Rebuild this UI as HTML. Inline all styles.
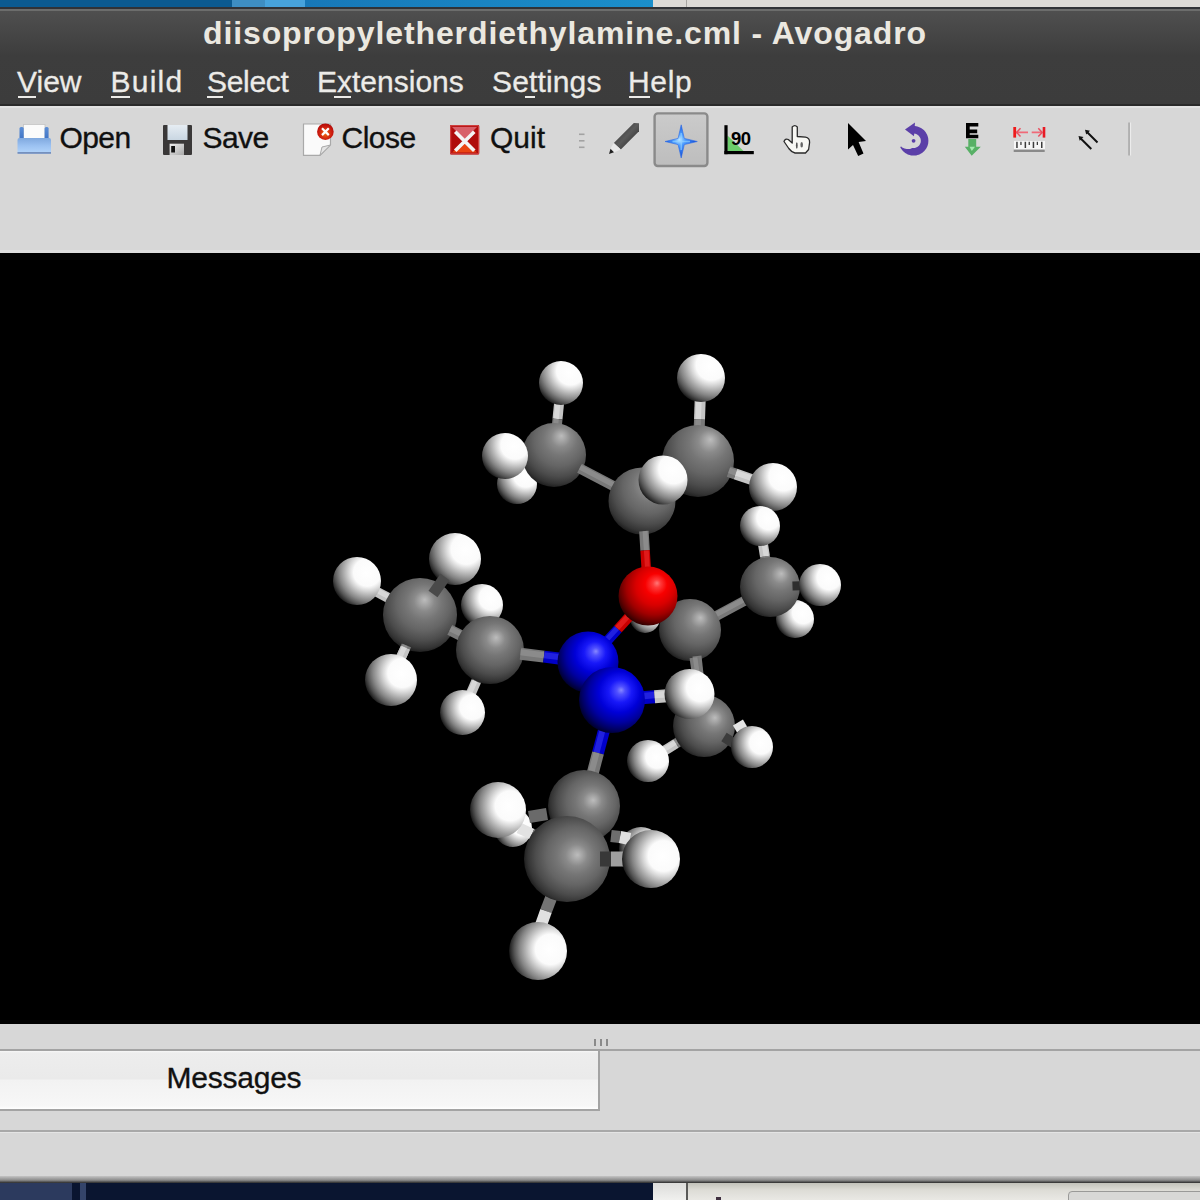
<!DOCTYPE html>
<html><head><meta charset="utf-8">
<style>
html,body{margin:0;padding:0;width:1200px;height:1200px;overflow:hidden;background:#000;font-family:"Liberation Sans",sans-serif;}
.a{position:absolute;}
.t{position:absolute;white-space:nowrap;line-height:1;}
.menu{color:#ecebe8;font-size:30px;top:67px;-webkit-text-stroke:0.3px #ecebe8;}
.menu u{text-decoration:none;position:relative;}
.menu u:after{content:"";position:absolute;left:0;right:0;bottom:-6px;height:2px;background:#ecebe8;}
.tb{color:#101010;font-size:30px;top:123px;-webkit-text-stroke:0.35px #101010;}
</style></head>
<body>
<!-- desktop top strip -->
<div class="a" style="left:0;top:0;width:1200px;height:8px;background:#dcdad6"></div>
<div class="a" style="left:0;top:0;width:653px;height:8px;background:linear-gradient(90deg,#0b5a90 0,#0b5a90 232px,#3e8ec2 232px,#3e8ec2 265px,#47a3dc 265px,#47a3dc 305px,#1778b8 305px,#1b8fcb 653px)"></div>
<div class="a" style="left:686px;top:0;width:1px;height:8px;background:#a8a6a2"></div>
<!-- window frame -->
<div class="a" style="left:0;top:7px;width:1200px;height:2px;background:#303236"></div>
<div class="a" style="left:0;top:9px;width:1200px;height:2px;background:#6c6d6c"></div>
<div class="a" style="left:0;top:11px;width:1200px;height:93px;background:linear-gradient(180deg,#4f4f4f 0,#3d3d3d 45px,#3c3c3c 93px)"></div>
<div class="a" style="left:0;top:104px;width:1200px;height:2px;background:#2a2a2a"></div>
<div class="a" style="left:0;top:106px;width:1200px;height:2px;background:#e2e2e2"></div>
<div class="a" style="left:0;top:108px;width:1200px;height:145px;background:#d7d7d7"></div>
<div class="a" style="left:0;top:250px;width:1200px;height:3px;background:#dedede"></div>
<!-- GL area -->
<div class="a" style="left:0;top:253px;width:1200px;height:771px;background:#000"></div>
<!-- molecule -->
<svg class="a" style="left:0;top:253px;filter:blur(0.45px)" width="1200" height="771" viewBox="0 253 1200 771">
<defs>
<radialGradient id="g_H1" cx="0.766" cy="0.168" r="0.925" fx="0.690" fy="0.263"><stop offset="0" stop-color="#ffffff"/><stop offset="0.34" stop-color="#fbfbfb"/><stop offset="0.47" stop-color="#d6d6d6"/><stop offset="0.6" stop-color="#aeaeae"/><stop offset="0.73" stop-color="#868686"/><stop offset="0.86" stop-color="#565656"/><stop offset="0.95" stop-color="#2e2e2e"/><stop offset="1" stop-color="#161616"/></radialGradient>
<radialGradient id="g_H2" cx="0.766" cy="0.166" r="0.927" fx="0.690" fy="0.261"><stop offset="0" stop-color="#ffffff"/><stop offset="0.34" stop-color="#fbfbfb"/><stop offset="0.47" stop-color="#d6d6d6"/><stop offset="0.6" stop-color="#aeaeae"/><stop offset="0.73" stop-color="#868686"/><stop offset="0.86" stop-color="#565656"/><stop offset="0.95" stop-color="#2e2e2e"/><stop offset="1" stop-color="#161616"/></radialGradient>
<radialGradient id="g_H5" cx="0.766" cy="0.225" r="0.883" fx="0.690" fy="0.304"><stop offset="0" stop-color="#ffffff"/><stop offset="0.34" stop-color="#fbfbfb"/><stop offset="0.47" stop-color="#d6d6d6"/><stop offset="0.6" stop-color="#aeaeae"/><stop offset="0.73" stop-color="#868686"/><stop offset="0.86" stop-color="#565656"/><stop offset="0.95" stop-color="#2e2e2e"/><stop offset="1" stop-color="#161616"/></radialGradient>
<radialGradient id="g_C3" cx="0.570" cy="0.320" r="0.693" fx="0.617" fy="0.200"><stop offset="0" stop-color="#bcbcbc"/><stop offset="0.1" stop-color="#a6a6a6"/><stop offset="0.22" stop-color="#8a8a8a"/><stop offset="0.38" stop-color="#767676"/><stop offset="0.58" stop-color="#656565"/><stop offset="0.78" stop-color="#4c4c4c"/><stop offset="0.92" stop-color="#343434"/><stop offset="1" stop-color="#1e1e1e"/></radialGradient>
<radialGradient id="g_H4" cx="0.766" cy="0.209" r="0.894" fx="0.690" fy="0.292"><stop offset="0" stop-color="#ffffff"/><stop offset="0.34" stop-color="#fbfbfb"/><stop offset="0.47" stop-color="#d6d6d6"/><stop offset="0.6" stop-color="#aeaeae"/><stop offset="0.73" stop-color="#868686"/><stop offset="0.86" stop-color="#565656"/><stop offset="0.95" stop-color="#2e2e2e"/><stop offset="1" stop-color="#161616"/></radialGradient>
<radialGradient id="g_C8" cx="0.605" cy="0.320" r="0.708" fx="0.674" fy="0.200"><stop offset="0" stop-color="#bcbcbc"/><stop offset="0.1" stop-color="#a6a6a6"/><stop offset="0.22" stop-color="#8a8a8a"/><stop offset="0.38" stop-color="#767676"/><stop offset="0.58" stop-color="#656565"/><stop offset="0.78" stop-color="#4c4c4c"/><stop offset="0.92" stop-color="#343434"/><stop offset="1" stop-color="#1e1e1e"/></radialGradient>
<radialGradient id="g_H9" cx="0.766" cy="0.227" r="0.881" fx="0.690" fy="0.305"><stop offset="0" stop-color="#ffffff"/><stop offset="0.34" stop-color="#fbfbfb"/><stop offset="0.47" stop-color="#d6d6d6"/><stop offset="0.6" stop-color="#aeaeae"/><stop offset="0.73" stop-color="#868686"/><stop offset="0.86" stop-color="#565656"/><stop offset="0.95" stop-color="#2e2e2e"/><stop offset="1" stop-color="#161616"/></radialGradient>
<radialGradient id="g_H10" cx="0.766" cy="0.249" r="0.866" fx="0.690" fy="0.320"><stop offset="0" stop-color="#ffffff"/><stop offset="0.34" stop-color="#fbfbfb"/><stop offset="0.47" stop-color="#d6d6d6"/><stop offset="0.6" stop-color="#aeaeae"/><stop offset="0.73" stop-color="#868686"/><stop offset="0.86" stop-color="#565656"/><stop offset="0.95" stop-color="#2e2e2e"/><stop offset="1" stop-color="#161616"/></radialGradient>
<radialGradient id="g_C6" cx="0.591" cy="0.332" r="0.691" fx="0.652" fy="0.220"><stop offset="0" stop-color="#bcbcbc"/><stop offset="0.1" stop-color="#a6a6a6"/><stop offset="0.22" stop-color="#8a8a8a"/><stop offset="0.38" stop-color="#767676"/><stop offset="0.58" stop-color="#656565"/><stop offset="0.78" stop-color="#4c4c4c"/><stop offset="0.92" stop-color="#343434"/><stop offset="1" stop-color="#1e1e1e"/></radialGradient>
<radialGradient id="g_H7" cx="0.766" cy="0.223" r="0.884" fx="0.690" fy="0.302"><stop offset="0" stop-color="#ffffff"/><stop offset="0.34" stop-color="#fbfbfb"/><stop offset="0.47" stop-color="#d6d6d6"/><stop offset="0.6" stop-color="#aeaeae"/><stop offset="0.73" stop-color="#868686"/><stop offset="0.86" stop-color="#565656"/><stop offset="0.95" stop-color="#2e2e2e"/><stop offset="1" stop-color="#161616"/></radialGradient>
<radialGradient id="g_H13" cx="0.766" cy="0.301" r="0.832" fx="0.690" fy="0.358"><stop offset="0" stop-color="#ffffff"/><stop offset="0.34" stop-color="#fbfbfb"/><stop offset="0.47" stop-color="#d6d6d6"/><stop offset="0.6" stop-color="#aeaeae"/><stop offset="0.73" stop-color="#868686"/><stop offset="0.86" stop-color="#565656"/><stop offset="0.95" stop-color="#2e2e2e"/><stop offset="1" stop-color="#161616"/></radialGradient>
<radialGradient id="g_C11" cx="0.614" cy="0.365" r="0.676" fx="0.690" fy="0.276"><stop offset="0" stop-color="#bcbcbc"/><stop offset="0.1" stop-color="#a6a6a6"/><stop offset="0.22" stop-color="#8a8a8a"/><stop offset="0.38" stop-color="#767676"/><stop offset="0.58" stop-color="#656565"/><stop offset="0.78" stop-color="#4c4c4c"/><stop offset="0.92" stop-color="#343434"/><stop offset="1" stop-color="#1e1e1e"/></radialGradient>
<radialGradient id="g_H12" cx="0.766" cy="0.282" r="0.844" fx="0.690" fy="0.344"><stop offset="0" stop-color="#ffffff"/><stop offset="0.34" stop-color="#fbfbfb"/><stop offset="0.47" stop-color="#d6d6d6"/><stop offset="0.6" stop-color="#aeaeae"/><stop offset="0.73" stop-color="#868686"/><stop offset="0.86" stop-color="#565656"/><stop offset="0.95" stop-color="#2e2e2e"/><stop offset="1" stop-color="#161616"/></radialGradient>
<radialGradient id="g_Hh1" cx="0.766" cy="0.300" r="0.833" fx="0.690" fy="0.357"><stop offset="0" stop-color="#ffffff"/><stop offset="0.34" stop-color="#fbfbfb"/><stop offset="0.47" stop-color="#d6d6d6"/><stop offset="0.6" stop-color="#aeaeae"/><stop offset="0.73" stop-color="#868686"/><stop offset="0.86" stop-color="#565656"/><stop offset="0.95" stop-color="#2e2e2e"/><stop offset="1" stop-color="#161616"/></radialGradient>
<radialGradient id="g_C15" cx="0.603" cy="0.382" r="0.656" fx="0.671" fy="0.303"><stop offset="0" stop-color="#bcbcbc"/><stop offset="0.1" stop-color="#a6a6a6"/><stop offset="0.22" stop-color="#8a8a8a"/><stop offset="0.38" stop-color="#767676"/><stop offset="0.58" stop-color="#656565"/><stop offset="0.78" stop-color="#4c4c4c"/><stop offset="0.92" stop-color="#343434"/><stop offset="1" stop-color="#1e1e1e"/></radialGradient>
<radialGradient id="g_O" cx="0.593" cy="0.369" r="0.661" fx="0.654" fy="0.281"><stop offset="0" stop-color="#ff7878"/><stop offset="0.1" stop-color="#ff3a3a"/><stop offset="0.28" stop-color="#f80000"/><stop offset="0.5" stop-color="#d80000"/><stop offset="0.72" stop-color="#a00000"/><stop offset="0.88" stop-color="#620000"/><stop offset="1" stop-color="#2a0000"/></radialGradient>
<radialGradient id="g_H19" cx="0.766" cy="0.293" r="0.837" fx="0.690" fy="0.352"><stop offset="0" stop-color="#ffffff"/><stop offset="0.34" stop-color="#fbfbfb"/><stop offset="0.47" stop-color="#d6d6d6"/><stop offset="0.6" stop-color="#aeaeae"/><stop offset="0.73" stop-color="#868686"/><stop offset="0.86" stop-color="#565656"/><stop offset="0.95" stop-color="#2e2e2e"/><stop offset="1" stop-color="#161616"/></radialGradient>
<radialGradient id="g_H16" cx="0.766" cy="0.279" r="0.846" fx="0.690" fy="0.342"><stop offset="0" stop-color="#ffffff"/><stop offset="0.34" stop-color="#fbfbfb"/><stop offset="0.47" stop-color="#d6d6d6"/><stop offset="0.6" stop-color="#aeaeae"/><stop offset="0.73" stop-color="#868686"/><stop offset="0.86" stop-color="#565656"/><stop offset="0.95" stop-color="#2e2e2e"/><stop offset="1" stop-color="#161616"/></radialGradient>
<radialGradient id="g_H17" cx="0.766" cy="0.267" r="0.854" fx="0.690" fy="0.334"><stop offset="0" stop-color="#ffffff"/><stop offset="0.34" stop-color="#fbfbfb"/><stop offset="0.47" stop-color="#d6d6d6"/><stop offset="0.6" stop-color="#aeaeae"/><stop offset="0.73" stop-color="#868686"/><stop offset="0.86" stop-color="#565656"/><stop offset="0.95" stop-color="#2e2e2e"/><stop offset="1" stop-color="#161616"/></radialGradient>
<radialGradient id="g_C18" cx="0.538" cy="0.376" r="0.629" fx="0.563" fy="0.294"><stop offset="0" stop-color="#bcbcbc"/><stop offset="0.1" stop-color="#a6a6a6"/><stop offset="0.22" stop-color="#8a8a8a"/><stop offset="0.38" stop-color="#767676"/><stop offset="0.58" stop-color="#656565"/><stop offset="0.78" stop-color="#4c4c4c"/><stop offset="0.92" stop-color="#343434"/><stop offset="1" stop-color="#1e1e1e"/></radialGradient>
<radialGradient id="g_H21" cx="0.766" cy="0.335" r="0.813" fx="0.690" fy="0.382"><stop offset="0" stop-color="#ffffff"/><stop offset="0.34" stop-color="#fbfbfb"/><stop offset="0.47" stop-color="#d6d6d6"/><stop offset="0.6" stop-color="#aeaeae"/><stop offset="0.73" stop-color="#868686"/><stop offset="0.86" stop-color="#565656"/><stop offset="0.95" stop-color="#2e2e2e"/><stop offset="1" stop-color="#161616"/></radialGradient>
<radialGradient id="g_C20" cx="0.555" cy="0.390" r="0.623" fx="0.591" fy="0.317"><stop offset="0" stop-color="#bcbcbc"/><stop offset="0.1" stop-color="#a6a6a6"/><stop offset="0.22" stop-color="#8a8a8a"/><stop offset="0.38" stop-color="#767676"/><stop offset="0.58" stop-color="#656565"/><stop offset="0.78" stop-color="#4c4c4c"/><stop offset="0.92" stop-color="#343434"/><stop offset="1" stop-color="#1e1e1e"/></radialGradient>
<radialGradient id="g_H22" cx="0.766" cy="0.353" r="0.804" fx="0.690" fy="0.395"><stop offset="0" stop-color="#ffffff"/><stop offset="0.34" stop-color="#fbfbfb"/><stop offset="0.47" stop-color="#d6d6d6"/><stop offset="0.6" stop-color="#aeaeae"/><stop offset="0.73" stop-color="#868686"/><stop offset="0.86" stop-color="#565656"/><stop offset="0.95" stop-color="#2e2e2e"/><stop offset="1" stop-color="#161616"/></radialGradient>
<radialGradient id="g_N1" cx="0.578" cy="0.395" r="0.631" fx="0.630" fy="0.324"><stop offset="0" stop-color="#8888ff"/><stop offset="0.1" stop-color="#5050ff"/><stop offset="0.28" stop-color="#1818f8"/><stop offset="0.5" stop-color="#0000d8"/><stop offset="0.72" stop-color="#0000a0"/><stop offset="0.88" stop-color="#000062"/><stop offset="1" stop-color="#00002a"/></radialGradient>
<radialGradient id="g_C24" cx="0.606" cy="0.420" r="0.633" fx="0.677" fy="0.366"><stop offset="0" stop-color="#bcbcbc"/><stop offset="0.1" stop-color="#a6a6a6"/><stop offset="0.22" stop-color="#8a8a8a"/><stop offset="0.38" stop-color="#767676"/><stop offset="0.58" stop-color="#656565"/><stop offset="0.78" stop-color="#4c4c4c"/><stop offset="0.92" stop-color="#343434"/><stop offset="1" stop-color="#1e1e1e"/></radialGradient>
<radialGradient id="g_H25" cx="0.766" cy="0.372" r="0.795" fx="0.690" fy="0.409"><stop offset="0" stop-color="#ffffff"/><stop offset="0.34" stop-color="#fbfbfb"/><stop offset="0.47" stop-color="#d6d6d6"/><stop offset="0.6" stop-color="#aeaeae"/><stop offset="0.73" stop-color="#868686"/><stop offset="0.86" stop-color="#565656"/><stop offset="0.95" stop-color="#2e2e2e"/><stop offset="1" stop-color="#161616"/></radialGradient>
<radialGradient id="g_H26" cx="0.766" cy="0.380" r="0.792" fx="0.690" fy="0.414"><stop offset="0" stop-color="#ffffff"/><stop offset="0.34" stop-color="#fbfbfb"/><stop offset="0.47" stop-color="#d6d6d6"/><stop offset="0.6" stop-color="#aeaeae"/><stop offset="0.73" stop-color="#868686"/><stop offset="0.86" stop-color="#565656"/><stop offset="0.95" stop-color="#2e2e2e"/><stop offset="1" stop-color="#161616"/></radialGradient>
<radialGradient id="g_H23" cx="0.766" cy="0.343" r="0.809" fx="0.690" fy="0.388"><stop offset="0" stop-color="#ffffff"/><stop offset="0.34" stop-color="#fbfbfb"/><stop offset="0.47" stop-color="#d6d6d6"/><stop offset="0.6" stop-color="#aeaeae"/><stop offset="0.73" stop-color="#868686"/><stop offset="0.86" stop-color="#565656"/><stop offset="0.95" stop-color="#2e2e2e"/><stop offset="1" stop-color="#161616"/></radialGradient>
<radialGradient id="g_N2" cx="0.584" cy="0.409" r="0.623" fx="0.640" fy="0.349"><stop offset="0" stop-color="#8888ff"/><stop offset="0.1" stop-color="#5050ff"/><stop offset="0.28" stop-color="#1818f8"/><stop offset="0.5" stop-color="#0000d8"/><stop offset="0.72" stop-color="#0000a0"/><stop offset="0.88" stop-color="#000062"/><stop offset="1" stop-color="#00002a"/></radialGradient>
<radialGradient id="g_Hh3" cx="0.766" cy="0.418" r="0.778" fx="0.690" fy="0.441"><stop offset="0" stop-color="#ffffff"/><stop offset="0.34" stop-color="#fbfbfb"/><stop offset="0.47" stop-color="#d6d6d6"/><stop offset="0.6" stop-color="#aeaeae"/><stop offset="0.73" stop-color="#868686"/><stop offset="0.86" stop-color="#565656"/><stop offset="0.95" stop-color="#2e2e2e"/><stop offset="1" stop-color="#161616"/></radialGradient>
<radialGradient id="g_Hh4" cx="0.766" cy="0.429" r="0.775" fx="0.690" fy="0.450"><stop offset="0" stop-color="#ffffff"/><stop offset="0.34" stop-color="#fbfbfb"/><stop offset="0.47" stop-color="#d6d6d6"/><stop offset="0.6" stop-color="#aeaeae"/><stop offset="0.73" stop-color="#868686"/><stop offset="0.86" stop-color="#565656"/><stop offset="0.95" stop-color="#2e2e2e"/><stop offset="1" stop-color="#161616"/></radialGradient>
<radialGradient id="g_C30" cx="0.577" cy="0.451" r="0.592" fx="0.629" fy="0.418"><stop offset="0" stop-color="#bcbcbc"/><stop offset="0.1" stop-color="#a6a6a6"/><stop offset="0.22" stop-color="#8a8a8a"/><stop offset="0.38" stop-color="#767676"/><stop offset="0.58" stop-color="#656565"/><stop offset="0.78" stop-color="#4c4c4c"/><stop offset="0.92" stop-color="#343434"/><stop offset="1" stop-color="#1e1e1e"/></radialGradient>
<radialGradient id="g_H32" cx="0.766" cy="0.408" r="0.782" fx="0.690" fy="0.434"><stop offset="0" stop-color="#ffffff"/><stop offset="0.34" stop-color="#fbfbfb"/><stop offset="0.47" stop-color="#d6d6d6"/><stop offset="0.6" stop-color="#aeaeae"/><stop offset="0.73" stop-color="#868686"/><stop offset="0.86" stop-color="#565656"/><stop offset="0.95" stop-color="#2e2e2e"/><stop offset="1" stop-color="#161616"/></radialGradient>
<radialGradient id="g_C31" cx="0.573" cy="0.471" r="0.578" fx="0.622" fy="0.452"><stop offset="0" stop-color="#bcbcbc"/><stop offset="0.1" stop-color="#a6a6a6"/><stop offset="0.22" stop-color="#8a8a8a"/><stop offset="0.38" stop-color="#767676"/><stop offset="0.58" stop-color="#656565"/><stop offset="0.78" stop-color="#4c4c4c"/><stop offset="0.92" stop-color="#343434"/><stop offset="1" stop-color="#1e1e1e"/></radialGradient>
<radialGradient id="g_H33" cx="0.766" cy="0.435" r="0.774" fx="0.690" fy="0.454"><stop offset="0" stop-color="#ffffff"/><stop offset="0.34" stop-color="#fbfbfb"/><stop offset="0.47" stop-color="#d6d6d6"/><stop offset="0.6" stop-color="#aeaeae"/><stop offset="0.73" stop-color="#868686"/><stop offset="0.86" stop-color="#565656"/><stop offset="0.95" stop-color="#2e2e2e"/><stop offset="1" stop-color="#161616"/></radialGradient>
<radialGradient id="g_H34" cx="0.766" cy="0.465" r="0.768" fx="0.690" fy="0.475"><stop offset="0" stop-color="#ffffff"/><stop offset="0.34" stop-color="#fbfbfb"/><stop offset="0.47" stop-color="#d6d6d6"/><stop offset="0.6" stop-color="#aeaeae"/><stop offset="0.73" stop-color="#868686"/><stop offset="0.86" stop-color="#565656"/><stop offset="0.95" stop-color="#2e2e2e"/><stop offset="1" stop-color="#161616"/></radialGradient>
</defs>
<line x1="559.1" y1="402.7" x2="557.5" y2="419.0" stroke="#c4c4c4" stroke-width="10"/>
<line x1="557.9" y1="402.6" x2="556.3" y2="418.9" stroke="#f2f2f2" stroke-width="5.0" opacity="0.45"/>
<line x1="557.5" y1="419.0" x2="556.8" y2="426.3" stroke="#787878" stroke-width="10"/>
<line x1="556.3" y1="418.9" x2="555.6" y2="426.2" stroke="#a4a4a4" stroke-width="5.0" opacity="0.45"/>
<line x1="700.2" y1="399.6" x2="699.5" y2="419.5" stroke="#c4c4c4" stroke-width="11"/>
<line x1="698.9" y1="399.5" x2="698.2" y2="419.5" stroke="#f2f2f2" stroke-width="5.5" opacity="0.45"/>
<line x1="699.5" y1="419.5" x2="699.2" y2="428.6" stroke="#787878" stroke-width="11"/>
<line x1="698.2" y1="419.5" x2="697.9" y2="428.6" stroke="#a4a4a4" stroke-width="5.5" opacity="0.45"/>
<circle cx="561" cy="383" r="22" fill="url(#g_H1)"/>
<circle cx="701" cy="378" r="24" fill="url(#g_H2)"/>
<circle cx="517" cy="484" r="20" fill="url(#g_H5)"/>
<circle cx="554" cy="455" r="32" fill="url(#g_C3)"/>
<line x1="579.5" y1="468.3" x2="615.3" y2="487.0" stroke="#787878" stroke-width="10"/>
<line x1="580.1" y1="467.3" x2="615.8" y2="486.0" stroke="#a4a4a4" stroke-width="5.0" opacity="0.45"/>
<circle cx="505" cy="456" r="23" fill="url(#g_H4)"/>
<circle cx="698" cy="461" r="36" fill="url(#g_C8)"/>
<line x1="728.6" y1="471.6" x2="735.5" y2="474.0" stroke="#787878" stroke-width="11"/>
<line x1="729.0" y1="470.4" x2="735.9" y2="472.8" stroke="#a4a4a4" stroke-width="5.5" opacity="0.45"/>
<line x1="735.5" y1="474.0" x2="752.6" y2="479.9" stroke="#c4c4c4" stroke-width="11"/>
<line x1="735.9" y1="472.8" x2="753.0" y2="478.7" stroke="#f2f2f2" stroke-width="5.5" opacity="0.45"/>
<circle cx="773" cy="487" r="24" fill="url(#g_H9)"/>
<line x1="762.9" y1="543.8" x2="765.0" y2="556.5" stroke="#c4c4c4" stroke-width="10"/>
<line x1="764.1" y1="543.6" x2="766.2" y2="556.3" stroke="#f2f2f2" stroke-width="5.0" opacity="0.45"/>
<line x1="765.0" y1="556.5" x2="765.6" y2="560.4" stroke="#787878" stroke-width="10"/>
<line x1="766.2" y1="556.3" x2="766.8" y2="560.2" stroke="#a4a4a4" stroke-width="5.0" opacity="0.45"/>
<circle cx="760" cy="526" r="20" fill="url(#g_H10)"/>
<circle cx="642" cy="501" r="33.5" fill="url(#g_C6)"/>
<circle cx="663" cy="480" r="24.5" fill="url(#g_H7)"/>
<line x1="643.9" y1="531.1" x2="645.1" y2="550.4" stroke="#787878" stroke-width="9.5"/>
<line x1="645.0" y1="531.0" x2="646.3" y2="550.3" stroke="#a4a4a4" stroke-width="4.8" opacity="0.45"/>
<line x1="645.1" y1="550.4" x2="646.3" y2="569.5" stroke="#c80000" stroke-width="9.5"/>
<line x1="646.3" y1="550.3" x2="647.5" y2="569.4" stroke="#ff3a3a" stroke-width="4.8" opacity="0.45"/>
<circle cx="795" cy="619" r="19" fill="url(#g_H13)"/>
<line x1="746.2" y1="599.8" x2="714.6" y2="616.8" stroke="#787878" stroke-width="10"/>
<line x1="745.6" y1="598.7" x2="714.0" y2="615.7" stroke="#a4a4a4" stroke-width="5.0" opacity="0.45"/>
<circle cx="770" cy="587" r="30" fill="url(#g_C11)"/>
<line x1="792.5" y1="586.1" x2="801.1" y2="585.8" stroke="#2e2e2e" stroke-width="9"/>
<circle cx="820" cy="585" r="21" fill="url(#g_H12)"/>
<circle cx="645" cy="618" r="15" fill="url(#g_Hh1)"/>
<circle cx="690" cy="630" r="31" fill="url(#g_C15)"/>
<line x1="606.5" y1="641.7" x2="618.0" y2="629.0" stroke="#0000c8" stroke-width="10"/>
<line x1="605.6" y1="640.9" x2="617.1" y2="628.2" stroke="#4a4aff" stroke-width="5.0" opacity="0.45"/>
<line x1="618.0" y1="629.0" x2="630.1" y2="615.6" stroke="#c80000" stroke-width="10"/>
<line x1="617.1" y1="628.2" x2="629.3" y2="614.8" stroke="#ff3a3a" stroke-width="5.0" opacity="0.45"/>
<circle cx="648" cy="596" r="29.5" fill="url(#g_O)"/>
<line x1="697" y1="656" x2="699" y2="674" stroke="#7a7a7a" stroke-width="9"/>
<line x1="376.0" y1="591.3" x2="388.5" y2="598.0" stroke="#c4c4c4" stroke-width="10"/>
<line x1="376.6" y1="590.2" x2="389.1" y2="596.9" stroke="#f2f2f2" stroke-width="5.0" opacity="0.45"/>
<line x1="388.5" y1="598.0" x2="390.7" y2="599.2" stroke="#787878" stroke-width="10"/>
<line x1="389.1" y1="596.9" x2="391.3" y2="598.1" stroke="#a4a4a4" stroke-width="5.0" opacity="0.45"/>
<line x1="400.5" y1="658.6" x2="405.5" y2="647.5" stroke="#c4c4c4" stroke-width="10"/>
<line x1="399.4" y1="658.1" x2="404.4" y2="647.0" stroke="#f2f2f2" stroke-width="5.0" opacity="0.45"/>
<line x1="405.5" y1="647.5" x2="406.4" y2="645.4" stroke="#787878" stroke-width="10"/>
<line x1="404.4" y1="647.0" x2="405.3" y2="644.9" stroke="#a4a4a4" stroke-width="5.0" opacity="0.45"/>
<line x1="477.7" y1="678.0" x2="476.2" y2="681.2" stroke="#787878" stroke-width="10"/>
<line x1="476.6" y1="677.5" x2="475.2" y2="680.8" stroke="#a4a4a4" stroke-width="5.0" opacity="0.45"/>
<line x1="476.2" y1="681.2" x2="470.7" y2="694.0" stroke="#c4c4c4" stroke-width="10"/>
<line x1="475.2" y1="680.8" x2="469.6" y2="693.5" stroke="#f2f2f2" stroke-width="5.0" opacity="0.45"/>
<line x1="485.3" y1="623.6" x2="486.0" y2="627.5" stroke="#c4c4c4" stroke-width="9"/>
<line x1="486.4" y1="623.4" x2="487.1" y2="627.3" stroke="#f2f2f2" stroke-width="4.5" opacity="0.45"/>
<line x1="486.0" y1="627.5" x2="484.6" y2="619.9" stroke="#787878" stroke-width="9"/>
<line x1="487.1" y1="627.3" x2="485.7" y2="619.7" stroke="#a4a4a4" stroke-width="4.5" opacity="0.45"/>
<circle cx="482" cy="605" r="21" fill="url(#g_H19)"/>
<circle cx="357" cy="581" r="24" fill="url(#g_H16)"/>
<circle cx="455" cy="559" r="26" fill="url(#g_H17)"/>
<circle cx="420" cy="615" r="37" fill="url(#g_C18)"/>
<line x1="433" y1="594" x2="445" y2="577" stroke="#4a4a4a" stroke-width="11"/>
<line x1="406.4" y1="645.4" x2="405.5" y2="647.5" stroke="#787878" stroke-width="10"/>
<line x1="405.3" y1="644.9" x2="404.4" y2="647.0" stroke="#a4a4a4" stroke-width="5.0" opacity="0.45"/>
<line x1="405.5" y1="647.5" x2="400.5" y2="658.6" stroke="#c4c4c4" stroke-width="10"/>
<line x1="404.4" y1="647.0" x2="399.4" y2="658.1" stroke="#f2f2f2" stroke-width="5.0" opacity="0.45"/>
<circle cx="391" cy="680" r="26" fill="url(#g_H21)"/>
<line x1="449.8" y1="629.9" x2="462.6" y2="636.3" stroke="#787878" stroke-width="11"/>
<line x1="450.4" y1="628.7" x2="463.2" y2="635.1" stroke="#a4a4a4" stroke-width="5.5" opacity="0.45"/>
<circle cx="490" cy="650" r="34" fill="url(#g_C20)"/>
<circle cx="462.5" cy="712.5" r="22.5" fill="url(#g_H22)"/>
<line x1="520.4" y1="653.7" x2="543.9" y2="656.6" stroke="#787878" stroke-width="12"/>
<line x1="520.5" y1="652.3" x2="544.1" y2="655.2" stroke="#a4a4a4" stroke-width="6.0" opacity="0.45"/>
<line x1="543.9" y1="656.6" x2="560.8" y2="658.7" stroke="#0000c8" stroke-width="12"/>
<line x1="544.1" y1="655.2" x2="560.9" y2="657.2" stroke="#4a4aff" stroke-width="6.0" opacity="0.45"/>
<circle cx="588" cy="662" r="30.5" fill="url(#g_N1)"/>
<line x1="604.4" y1="728.7" x2="598.0" y2="753.0" stroke="#0000c8" stroke-width="12"/>
<line x1="603.0" y1="728.3" x2="596.6" y2="752.6" stroke="#4a4aff" stroke-width="6.0" opacity="0.45"/>
<line x1="598.0" y1="753.0" x2="592.3" y2="774.7" stroke="#787878" stroke-width="12"/>
<line x1="596.6" y1="752.6" x2="590.9" y2="774.3" stroke="#a4a4a4" stroke-width="6.0" opacity="0.45"/>
<line x1="641.6" y1="697.7" x2="654.6" y2="696.7" stroke="#0000c8" stroke-width="13"/>
<line x1="641.5" y1="696.2" x2="654.5" y2="695.1" stroke="#4a4aff" stroke-width="6.5" opacity="0.45"/>
<line x1="654.6" y1="696.7" x2="667.1" y2="695.7" stroke="#c4c4c4" stroke-width="13"/>
<line x1="654.5" y1="695.1" x2="666.9" y2="694.2" stroke="#f2f2f2" stroke-width="6.5" opacity="0.45"/>
<line x1="680.3" y1="740.8" x2="676.0" y2="743.5" stroke="#787878" stroke-width="10"/>
<line x1="679.7" y1="739.8" x2="675.4" y2="742.5" stroke="#a4a4a4" stroke-width="5.0" opacity="0.45"/>
<line x1="676.0" y1="743.5" x2="664.0" y2="751.0" stroke="#c4c4c4" stroke-width="10"/>
<line x1="675.4" y1="742.5" x2="663.4" y2="750.0" stroke="#f2f2f2" stroke-width="5.0" opacity="0.45"/>
<line x1="694.0" y1="657.6" x2="700.0" y2="698.4" stroke="#787878" stroke-width="9"/>
<line x1="695.1" y1="657.5" x2="701.0" y2="698.2" stroke="#a4a4a4" stroke-width="4.5" opacity="0.45"/>
<circle cx="704" cy="726" r="31" fill="url(#g_C24)"/>
<line x1="724" y1="737" x2="735" y2="744" stroke="#3c3c3c" stroke-width="10"/>
<line x1="735" y1="729" x2="745" y2="723" stroke="#e4e4e4" stroke-width="8"/>
<circle cx="752" cy="747" r="21" fill="url(#g_H25)"/>
<circle cx="648" cy="761" r="21" fill="url(#g_H26)"/>
<circle cx="689.5" cy="694" r="25" fill="url(#g_H23)"/>
<circle cx="612" cy="700" r="33" fill="url(#g_N2)"/>
<circle cx="513" cy="828" r="19" fill="url(#g_Hh3)"/>
<circle cx="641" cy="849" r="22" fill="url(#g_Hh4)"/>
<circle cx="584" cy="806" r="36" fill="url(#g_C30)"/>
<line x1="529" y1="817" x2="547" y2="814" stroke="#6a6a6a" stroke-width="12"/>
<line x1="519" y1="828" x2="532" y2="834" stroke="#e2e2e2" stroke-width="11"/>
<line x1="532" y1="834" x2="544" y2="839" stroke="#747474" stroke-width="11"/>
<line x1="611" y1="836" x2="620" y2="837" stroke="#6e6e6e" stroke-width="12"/>
<line x1="620" y1="837" x2="630" y2="839" stroke="#dedede" stroke-width="12"/>
<circle cx="498" cy="810" r="28" fill="url(#g_H32)"/>
<line x1="551" y1="898" x2="546" y2="911" stroke="#747474" stroke-width="12"/>
<line x1="546" y1="911" x2="541" y2="925" stroke="#e0e0e0" stroke-width="12"/>
<circle cx="567" cy="859" r="43" fill="url(#g_C31)"/>
<line x1="600" y1="859" x2="611" y2="859" stroke="#383838" stroke-width="15"/>
<line x1="611" y1="859" x2="624" y2="859" stroke="#a0a0a0" stroke-width="15"/>
<circle cx="651" cy="859" r="29" fill="url(#g_H33)"/>
<circle cx="538" cy="951" r="29" fill="url(#g_H34)"/>
</svg>
<!-- /molecule -->
<!-- bottom dock -->
<div class="a" style="left:0;top:1024px;width:1200px;height:152px;background:#d7d7d7"></div>
<div class="a" style="left:0;top:1049px;width:1200px;height:2px;background:#a3a3a3"></div>
<div class="a" style="left:0;top:1051px;width:598px;height:58px;background:linear-gradient(180deg,#f7f7f7 0,#ededed 2px,#eaeaea 28px,#f2f2f2 29px,#f7f7f7 55px,#ffffff 58px)"></div>
<div class="a" style="left:598px;top:1049px;width:2px;height:62px;background:#a3a3a3"></div>
<div class="a" style="left:0;top:1109px;width:600px;height:2px;background:#a3a3a3"></div>
<div class="a" style="left:0;top:1130px;width:1200px;height:2px;background:#a8a8a8"></div>
<div class="a" style="left:0;top:1132px;width:1200px;height:1px;background:#e4e4e4"></div>
<div class="a" style="left:594px;top:1039px;width:2px;height:7px;background:#8a8a8a"></div>
<div class="a" style="left:600px;top:1039px;width:2px;height:7px;background:#8a8a8a"></div>
<div class="a" style="left:606px;top:1039px;width:2px;height:7px;background:#8a8a8a"></div>
<div class="a" style="left:0;top:1176px;width:1200px;height:7px;background:linear-gradient(180deg,#c4c4c4,#8a8a8a 60%,#2a2a2a)"></div>
<!-- desktop bottom strip -->
<div class="a" style="left:0;top:1183px;width:1200px;height:17px;background:linear-gradient(180deg,#c2c2ba 0,#dddcd6 7px,#e9e8e4 17px)"></div>
<div class="a" style="left:653px;top:1183px;width:33px;height:17px;background:linear-gradient(180deg,#dcdcda,#f0f0ee)"></div>
<div class="a" style="left:716px;top:1197px;width:5px;height:3px;background:#403040"></div>
<div class="a" style="left:0;top:1183px;width:653px;height:17px;background:#0a1530"></div>
<div class="a" style="left:0;top:1183px;width:72px;height:17px;background:#2c3a5e"></div>
<div class="a" style="left:80px;top:1183px;width:6px;height:17px;background:#34446a"></div>
<div class="a" style="left:686px;top:1183px;width:2px;height:17px;background:#5a5a58"></div>
<div class="a" style="left:1068px;top:1191px;width:132px;height:9px;background:#d8d8d6;border:1px solid #9a9a98;border-radius:4px 0 0 0"></div>

<!-- toolbar icons -->
<svg class="a" style="left:0;top:0" width="1200" height="260" viewBox="0 0 1200 260">
<defs>
<linearGradient id="gTray" x1="0" y1="0" x2="0" y2="1"><stop offset="0" stop-color="#7fa8de"/><stop offset="0.5" stop-color="#9cc2f2"/><stop offset="1" stop-color="#b4d6fb"/></linearGradient>
<linearGradient id="gPost" x1="0" y1="0" x2="0" y2="1"><stop offset="0" stop-color="#5d8fd6"/><stop offset="1" stop-color="#3f74c6"/></linearGradient>
<linearGradient id="gLabel" x1="0" y1="0" x2="0" y2="1"><stop offset="0" stop-color="#e6edf3"/><stop offset="1" stop-color="#c9d6e2"/></linearGradient>
<linearGradient id="gShut" x1="0" y1="0" x2="1" y2="1"><stop offset="0" stop-color="#f0f0f0"/><stop offset="1" stop-color="#a8a8a8"/></linearGradient>
<radialGradient id="gRedC" cx="0.5" cy="0.6" r="0.6"><stop offset="0" stop-color="#f07010"/><stop offset="0.6" stop-color="#d02010"/><stop offset="1" stop-color="#b00808"/></radialGradient>
<linearGradient id="gQuit" x1="0" y1="0" x2="0" y2="1"><stop offset="0" stop-color="#e47070"/><stop offset="0.45" stop-color="#c02020"/><stop offset="0.7" stop-color="#b01010"/><stop offset="1" stop-color="#c02008"/></linearGradient>
<linearGradient id="gBtn" x1="0" y1="0" x2="0" y2="1"><stop offset="0" stop-color="#cbcbcb"/><stop offset="1" stop-color="#bdbdbd"/></linearGradient>
<radialGradient id="gStar" cx="0.45" cy="0.45" r="0.5"><stop offset="0" stop-color="#bfe8ff"/><stop offset="0.35" stop-color="#4a9cff"/><stop offset="1" stop-color="#1450d8"/></radialGradient>
<linearGradient id="gPen" x1="0" y1="0" x2="1" y2="1"><stop offset="0" stop-color="#2a2a2a"/><stop offset="0.5" stop-color="#5a5a5a"/><stop offset="1" stop-color="#1e1e1e"/></linearGradient>
</defs>
<!-- Open -->
<rect x="23.5" y="124.5" width="21.5" height="14" fill="#fbfbfb" stroke="#c4c4c4" stroke-width="0.8"/>
<rect x="19.5" y="127" width="4.2" height="12" rx="1.5" fill="url(#gPost)"/>
<rect x="44.6" y="127" width="4" height="12" rx="1.5" fill="url(#gPost)"/>
<rect x="17.5" y="138" width="33.5" height="15.8" rx="2" fill="url(#gTray)"/>
<rect x="17.5" y="152" width="33.5" height="1.8" fill="#7590bd"/>
<!-- Save -->
<rect x="163" y="125" width="29" height="30" rx="1" fill="#3a3838"/>
<rect x="167.5" y="125" width="20" height="15" fill="url(#gLabel)"/>
<rect x="169.6" y="143.7" width="14.4" height="11.3" fill="url(#gShut)"/>
<rect x="171.2" y="146" width="3.8" height="6.5" fill="#111"/>
<!-- Close -->
<path d="M303.5,124 L330.5,124 L330.5,145 L320,155.3 L303.5,155.3 Z" fill="#fafafa" stroke="#a9a9a9" stroke-width="1.2"/>
<path d="M320,155.3 L322,147 L330.5,145 Z" fill="#e4e4e4" stroke="#a9a9a9" stroke-width="1"/>
<circle cx="325.4" cy="131.7" r="8.3" fill="url(#gRedC)"/>
<path d="M322,128.3 L328.8,135.1 M328.8,128.3 L322,135.1" stroke="#fff" stroke-width="2.2"/>
<!-- Quit -->
<rect x="450" y="125" width="29.2" height="29.4" rx="1" fill="#b00c0c"/>
<path d="M452,127 L477,127 L464.6,139.5 Z" fill="#d8606a"/>
<path d="M452,152.5 L477,152.5 L464.6,141.5 Z" fill="#ea4412"/>
<rect x="450.6" y="125.6" width="28" height="28.2" rx="1" fill="none" stroke="#d04040" stroke-width="1.2"/>
<path d="M456.5,133 L473,149.5 M473,133 L456.5,149.5" stroke="#f4f4f4" stroke-width="3.6" stroke-linecap="square"/>
<!-- handle -->
<rect x="579" y="133.5" width="5.5" height="1.6" fill="#a2a2a2"/>
<rect x="579" y="140" width="5.5" height="1.6" fill="#a2a2a2"/>
<rect x="579" y="146.5" width="5.5" height="1.6" fill="#a2a2a2"/>
<!-- pencil -->
<path d="M613.8,142.9 L633.8,122.9 L639,123.3 L639,131.3 L620.8,149.6 Z" fill="url(#gPen)"/>
<path d="M613.8,142.9 L620.8,149.6 L615,152 L609.5,153.5 L611,147.5 Z" fill="#e9e9e9"/>
<path d="M609,154 L610.5,148.8 L614,152.2 Z" fill="#202020"/>
<!-- selected button -->
<rect x="654.6" y="113.4" width="52.8" height="52.6" rx="3.2" fill="url(#gBtn)" stroke="#8a8a8a" stroke-width="2.4"/>
<path d="M681.2,124.8 L684.3,138.4 L697.3,141.5 L684.3,144.6 L681.2,158 L678.1,144.6 L665,141.5 L678.1,138.4 Z" fill="url(#gStar)" stroke="#2a6ae8" stroke-width="0.6" stroke-linejoin="round"/><path d="M681.2,133 L681.2,150 M672.5,141.5 L690,141.5" stroke="#9ad8ff" stroke-width="1.5" opacity="0.6"/>
<!-- angle -->
<path d="M727.5,135.5 L727.5,151 L743.5,151 Z" fill="#6ccd6c"/>
<rect x="724.4" y="125.2" width="3.2" height="29" fill="#000"/>
<rect x="724.4" y="151" width="29.4" height="3.2" fill="#000"/>
<text x="731" y="145" font-family="Liberation Sans" font-weight="bold" font-size="18.5" fill="#000" letter-spacing="-0.5">90</text>
<!-- hand -->
<path d="M792.2,127 Q794.8,124.2 797.3,127 L797.3,136.5 L805.5,137.2 Q809.8,138 809.6,142.5 L808.6,149.5 L805.5,153 L795,153 Q791.5,152.2 788.8,148.5 L784,141.5 Q785,138.2 788.3,139.5 L792.2,143 Z" fill="#f8f8f4" stroke="#2a2a2a" stroke-width="1.3" stroke-linejoin="round"/>
<ellipse cx="796.8" cy="145.5" rx="0.9" ry="3.2" fill="#555"/>
<ellipse cx="801.7" cy="144.8" rx="1.3" ry="2.8" fill="#666"/>
<!-- arrow -->
<path d="M848,123 L848,149.6 L853,145 L858.2,156 L863.5,153.4 L858.6,142 L866,141 Z" fill="#000"/>
<!-- rotate -->
<path d="M913.6,126.0 L914.9,126.1 L916.2,126.2 L917.4,126.5 L918.7,126.9 L919.9,127.4 L921.0,128.0 L922.1,128.7 L923.1,129.5 L924.1,130.3 L924.9,131.3 L925.7,132.3 L926.4,133.4 L927.0,134.5 L927.5,135.7 L927.9,137.0 L928.2,138.2 L928.3,139.5 L928.4,140.8 L928.3,142.1 L928.2,143.4 L927.9,144.6 L927.5,145.9 L927.0,147.1 L926.4,148.2 L925.7,149.3 L924.9,150.3 L924.1,151.3 L923.1,152.1 L922.1,152.9 L921.0,153.6 L919.9,154.2 L918.7,154.7 L917.4,155.1 L916.2,155.4 L914.9,155.5 L913.6,155.6 L912.3,155.5 L911.0,155.4 L909.8,155.1 L908.5,154.7 L907.3,154.2 L906.2,153.6 L905.1,152.9 L904.1,152.1 L903.1,151.3 L902.3,150.3 L901.5,149.3 L900.8,148.2 L900.2,147.1 L901.2,146.6 L902.2,147.4 L903.3,148.0 L904.5,148.5 L905.6,148.8 L906.7,149.0 L907.8,149.1 L908.8,149.1 L909.8,148.9 L910.7,148.7 L911.6,148.3 L912.3,147.9 L913.0,148.0 L913.6,148.0 L914.2,148.0 L914.9,147.9 L915.5,147.8 L916.1,147.6 L916.6,147.3 L917.2,147.0 L917.7,146.7 L918.2,146.3 L918.7,145.9 L919.1,145.4 L919.5,144.9 L919.8,144.4 L920.1,143.8 L920.4,143.3 L920.6,142.7 L920.7,142.1 L920.8,141.4 L920.8,140.8 L920.8,140.2 L920.7,139.5 L920.6,138.9 L920.4,138.3 L920.1,137.8 L919.8,137.2 L919.5,136.7 L919.1,136.2 L918.7,135.7 L918.2,135.3 L917.7,134.9 L917.2,134.6 L916.6,134.3 L916.1,134.0 L915.5,133.8 L914.9,133.7 L914.2,133.6 L913.6,133.6 Z" fill="#5b3fa8"/>
<path d="M905,129.6 L915,122.6 L914,136.2 Z" fill="#5b3fa8"/>
<circle cx="913.6" cy="140.8" r="1.9" fill="#5b3fa8"/>
<!-- E -->
<path d="M966,123.1 L978.3,123.1 L978.3,126.6 L969.7,126.6 L969.7,129.6 L977.2,129.6 L977.2,133.2 L969.7,133.2 L969.7,134.7 L978.3,134.7 L978.3,138.3 L966,138.3 Z" fill="#000"/>
<path d="M968.3,139 L976.2,139 L976.2,146.7 L980.8,146.7 L971.7,155.8 L964.8,146.7 L968.3,146.7 Z" fill="#58b066"/>
<path d="M969.5,146.7 L975,146.7 L971.8,151 Z" fill="#a4eab0"/>
<!-- measure -->
<rect x="1013.3" y="127" width="2.8" height="10.6" fill="#ee1a1a"/>
<rect x="1042.7" y="127" width="2.6" height="10.6" fill="#e81a24"/>
<path d="M1016,132.4 L1028,132.4 M1031.7,132.4 L1042.7,132.4" stroke="#f06a78" stroke-width="1.6"/>
<path d="M1020.5,128.3 L1016.6,132.4 L1020.5,136.5 M1038.3,128.3 L1042.2,132.4 L1038.3,136.5" fill="none" stroke="#e85060" stroke-width="1.5"/>
<rect x="1014" y="141" width="31" height="8.6" fill="#f6f6f6"/>
<g fill="#3c3c3c"><rect x="1016.2" y="141.8" width="1.5" height="6.2"/><rect x="1020.3" y="141.8" width="1.3" height="3.2"/><rect x="1024.6" y="141.8" width="1.5" height="6.2"/><rect x="1028.6" y="141.8" width="1.3" height="3.2"/><rect x="1032.7" y="141.8" width="1.5" height="6.2"/><rect x="1036.7" y="141.8" width="1.3" height="3.2"/><rect x="1041" y="141.8" width="1.5" height="6.2"/></g>
<rect x="1013.7" y="149.6" width="31" height="2.4" fill="#8a8a8a"/>
<!-- double arrows -->
<path d="M1086.5,131.5 L1097.5,142.5 M1080,137.8 L1091.3,149" stroke="#111" stroke-width="2"/>
<path d="M1085,129.8 L1090,130.8 L1086.2,134.6 Z M1078.5,136 L1083.5,137 L1079.7,140.8 Z" fill="#111"/>
<!-- separator -->
<rect x="1128.3" y="122.5" width="1.6" height="33" fill="#a6a6a6"/>
<rect x="1129.9" y="122.5" width="1.2" height="33" fill="#ececec"/>
</svg>
<!-- title -->
<div class="t" id="title" style="left:203px;top:17px;font-size:32px;font-weight:bold;color:#ebe8e0;letter-spacing:0.89px">diisopropyletherdiethylamine.cml - Avogadro</div>
<!-- menu -->
<div class="t menu" style="left:17px">View</div>
<div class="t menu" style="left:110.5px;letter-spacing:1.25px">Build</div>
<div class="t menu" style="left:207px;letter-spacing:-0.3px">Select</div>
<div class="t menu" style="left:317px">Extensions</div>
<div class="t menu" style="left:492px;letter-spacing:0.14px">Settings</div>
<div class="t menu" style="left:628px;letter-spacing:0.67px">Help</div>
<div class="a" style="left:17.5px;top:96px;width:18.5px;height:2px;background:#ecebe8"></div>
<div class="a" style="left:111px;top:96px;width:19px;height:2px;background:#ecebe8"></div>
<div class="a" style="left:207px;top:96px;width:16px;height:2px;background:#ecebe8"></div>
<div class="a" style="left:334px;top:96px;width:16.5px;height:2px;background:#ecebe8"></div>
<div class="a" style="left:525px;top:96px;width:10px;height:2px;background:#ecebe8"></div>
<div class="a" style="left:629px;top:96px;width:20.5px;height:2px;background:#ecebe8"></div>
<!-- toolbar text -->
<div class="t tb" style="left:59.5px;letter-spacing:-0.6px">Open</div>
<div class="t tb" style="left:202.6px;letter-spacing:-0.6px">Save</div>
<div class="t tb" style="left:341.6px;letter-spacing:-0.55px">Close</div>
<div class="t tb" style="left:490px">Quit</div>
<!-- messages -->
<div class="t" style="left:166.5px;top:1063px;font-size:30px;color:#111;letter-spacing:-0.23px;-webkit-text-stroke:0.35px #111">Messages</div>
</body></html>
